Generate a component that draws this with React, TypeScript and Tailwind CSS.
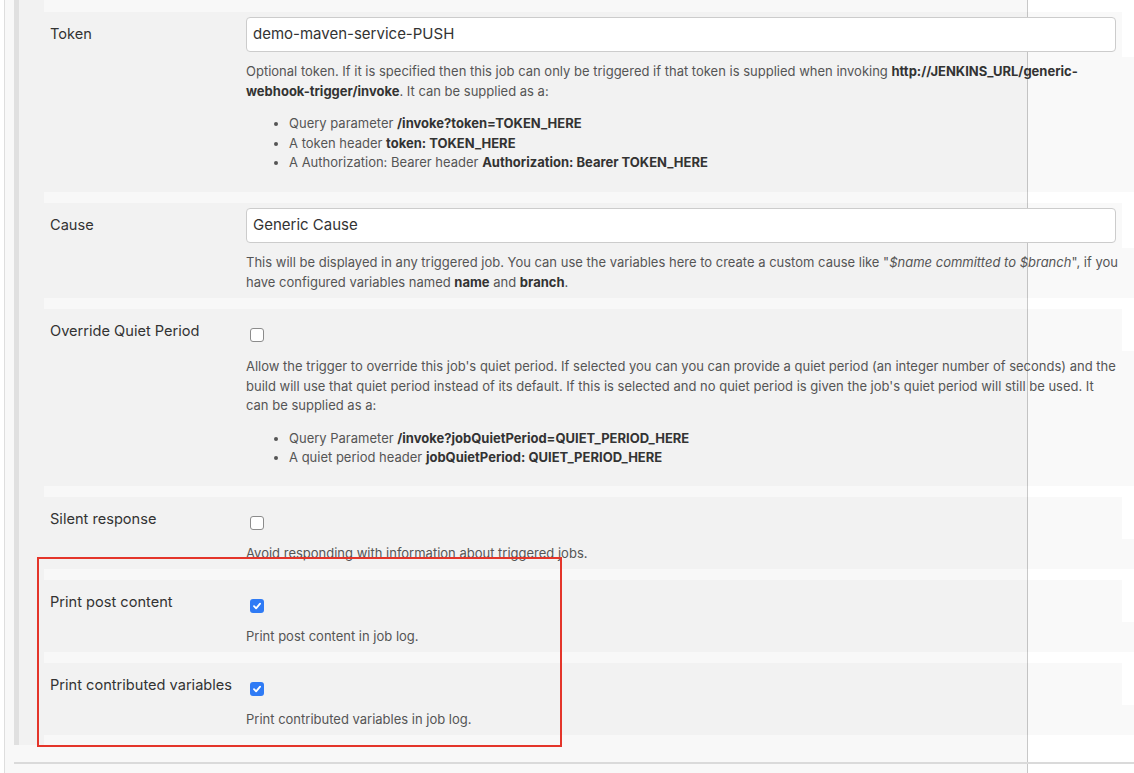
import type { ReactNode } from "react";

const font = { fontFamily: 'Inter, "Noto Sans", "Liberation Sans", sans-serif' };

function Checkbox({ checked }: { checked?: boolean }) {
	if (checked) {
		return (
			<span className="flex h-[14px] w-[14px] items-center justify-center rounded-[3px] bg-[#2f7bf5]">
				<svg width="10" height="10" viewBox="0 0 10 10" fill="none">
					<path d="M2 5.2 L4.1 7.3 L8.1 2.6" stroke="white" strokeWidth="1.8" strokeLinecap="round" strokeLinejoin="round" />
				</svg>
			</span>
		);
	}
	return <span className="block h-[14px] w-[14px] rounded-[3px] border border-[#8c8c8c] bg-white" />;
}

function TextRow({ label, value, children, descClass }: { label: string; value: string; children: ReactNode; descClass: string }) {
	return (
		<div>
			<div className="mr-[12px] flex bg-black/[0.025]">
				<div className="w-[202px] shrink-0 pl-[6px] pt-[12px] text-[14.6px] leading-[20px] text-[#333]">{label}</div>
				<div className="flex-1 pb-[5px] pr-[6px] pt-[5px]">
					<div className="flex h-[35px] items-center rounded-[4px] border border-[#cccccc] bg-white pl-[6px] text-[15px] text-[#333]">
						{value}
					</div>
				</div>
			</div>
			<div className={`bg-black/[0.025] pl-[202px] text-[13px] leading-[19.5px] text-[#555] ${descClass}`}>{children}</div>
		</div>
	);
}

function CheckRow({ label, checked, children, descClass }: { label: string; checked?: boolean; children: ReactNode; descClass: string }) {
	return (
		<div>
			<div className="mr-[12px] flex h-[42px] bg-black/[0.025]">
				<div className="w-[202px] shrink-0 pl-[6px] pt-[12px] text-[14.6px] leading-[20px] text-[#333]">{label}</div>
				<div className="pl-[4px] pt-[19px]">
					<Checkbox checked={checked} />
				</div>
			</div>
			<div className={`bg-black/[0.025] pl-[202px] text-[13px] leading-[19.5px] text-[#555] ${descClass}`}>{children}</div>
		</div>
	);
}

const B = ({ children }: { children: ReactNode }) => <b className="font-bold text-[#333]">{children}</b>;

export default function App() {
	return (
		<div
			className="relative h-[773px] w-[1134px] overflow-hidden bg-[linear-gradient(to_right,#ffffff_0px,#ffffff_4px,#dedede_4px,#dedede_5px,#f8f8f8_5px,#f8f8f8_1027px,#c8c8c8_1027px,#c8c8c8_1028px,#ffffff_1028px)]"
			style={font}
		>
			<div className="pl-[14px]">
				<div className="flex">
					<div className="w-[5px] shrink-0 bg-[#e0e0e0]" />
					<div className="w-[25px] shrink-0 bg-black/[0.025]" />
					<div className="flex flex-1 flex-col gap-[11px] whitespace-nowrap pb-[10px] pt-[12px]">
						{/* TOKEN */}
						<TextRow label="Token" value="demo-maven-service-PUSH" descClass="pt-[5px] pb-[19.5px]">
							<p>
								Optional token. If it is specified then this job can only be triggered if that token is supplied when invoking{" "}
								<B>http://JENKINS_URL/generic-</B>
								<br />
								<B>webhook-trigger/invoke</B>. It can be supplied as a:
							</p>
							<ul className="mt-[13px] list-disc pl-[43px]">
								<li>
									Query parameter <B>/invoke?token=TOKEN_HERE</B>
								</li>
								<li>
									A token header <B>token: TOKEN_HERE</B>
								</li>
								<li>
									A Authorization: Bearer header <B>Authorization: Bearer TOKEN_HERE</B>
								</li>
							</ul>
						</TextRow>

						{/* CAUSE */}
						<TextRow label="Cause" value="Generic Cause" descClass="pt-[5px] pb-[6px]">
							<p>
								This will be displayed in any triggered job. You can use the variables here to create a custom cause like "
								<i>$name committed to $branch</i>", if you
								<br />
								have configured variables named <B>name</B> and <B>branch</B>.
							</p>
						</TextRow>

						{/* QUIET PERIOD */}
						<CheckRow label="Override Quiet Period" descClass="pt-[6px] pb-[18.5px]">
							<p>
								Allow the trigger to override this job's quiet period. If selected you can you can provide a quiet period (an integer number of seconds) and the
								<br />
								build will use that quiet period instead of its default. If this is selected and no quiet period is given the job's quiet period will still be used. It
								<br />
								can be supplied as a:
							</p>
							<ul className="mt-[13px] list-disc pl-[43px]">
								<li>
									Query Parameter <B>/invoke?jobQuietPeriod=QUIET_PERIOD_HERE</B>
								</li>
								<li>
									A quiet period header <B>jobQuietPeriod: QUIET_PERIOD_HERE</B>
								</li>
							</ul>
						</CheckRow>

						<CheckRow label="Silent response" descClass="pt-[4.5px] pb-[6px]">
							<p>Avoid responding with information about triggered jobs.</p>
						</CheckRow>

						<CheckRow label="Print post content" checked descClass="pt-[4.5px] pb-[6px]">
							<p>Print post content in job log.</p>
						</CheckRow>

						<CheckRow label="Print contributed variables" checked descClass="pt-[4.5px] pb-[6px]">
							<p>Print contributed variables in job log.</p>
						</CheckRow>
					</div>
				</div>
				<div className="mt-[17px] h-[1.5px] bg-[#dadada]" />
			</div>

			{/* annotation */}
			<div className="absolute left-[37px] top-[557px] h-[190px] w-[525px] border-2 border-[#e4352a]" />
		</div>
	);
}
